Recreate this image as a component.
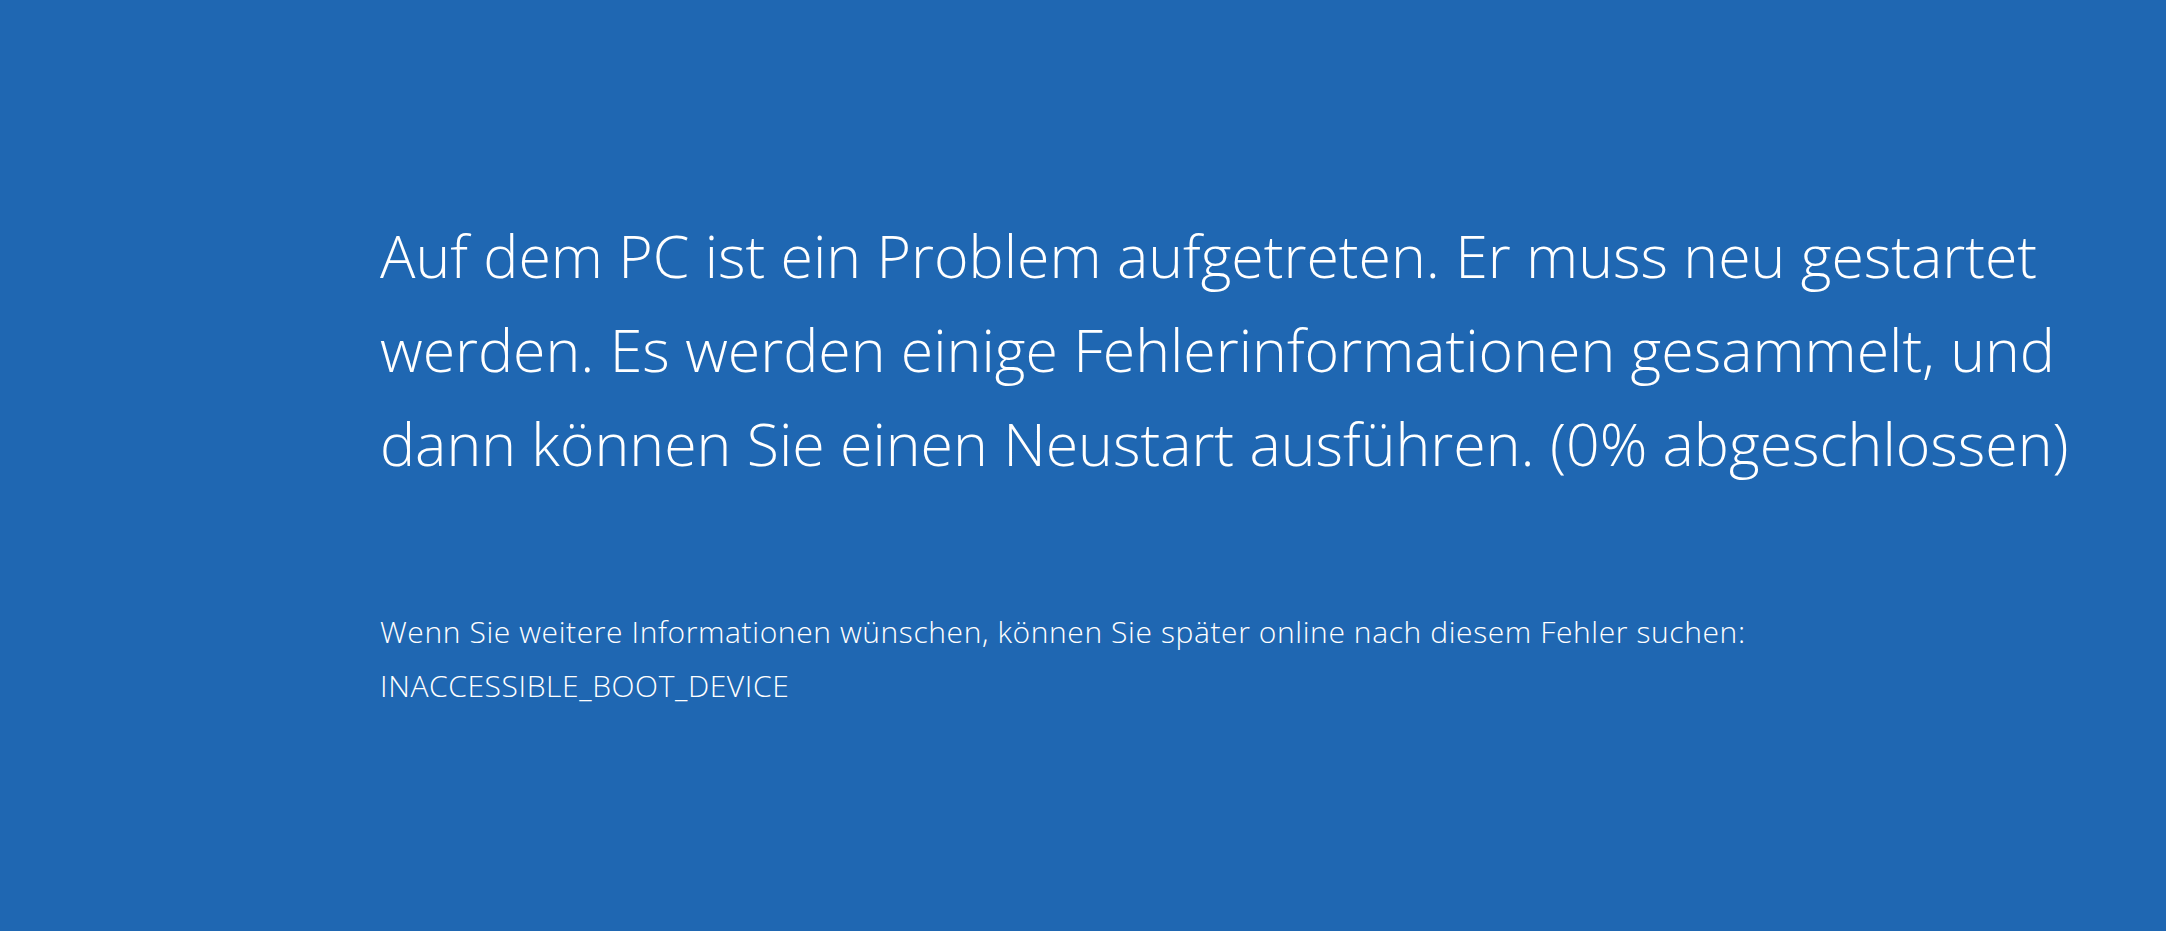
import React from 'react';

const bigLines = [
  'Auf dem PC ist ein Problem aufgetreten. Er muss neu gestartet',
  'werden. Es werden einige Fehlerinformationen gesammelt, und',
  'dann können Sie einen Neustart ausführen. (0% abgeschlossen)',
];

export default function App() {
  return (
    <div
      className="w-full h-[931px] overflow-hidden bg-[#1f67b2] text-white pl-[380px] pt-[208px]"
      style={{ fontFamily: '"Open Sans", "Noto Sans", sans-serif' }}
    >
      {/* Main message */}
      <div className="text-[59px] leading-[94px] font-light">
        {bigLines.map(line => (
          <div key={line} className="whitespace-nowrap">{line}</div>
        ))}
      </div>

      {/* Error details */}
      <div className="mt-[115px] text-[30px] leading-[54px] font-light tracking-[0.6px]">
        <div className="whitespace-nowrap">
          Wenn Sie weitere Informationen wünschen, können Sie später online nach diesem Fehler suchen:
        </div>
        <div className="whitespace-nowrap">INACCESSIBLE_BOOT_DEVICE</div>
      </div>
    </div>
  );
}
